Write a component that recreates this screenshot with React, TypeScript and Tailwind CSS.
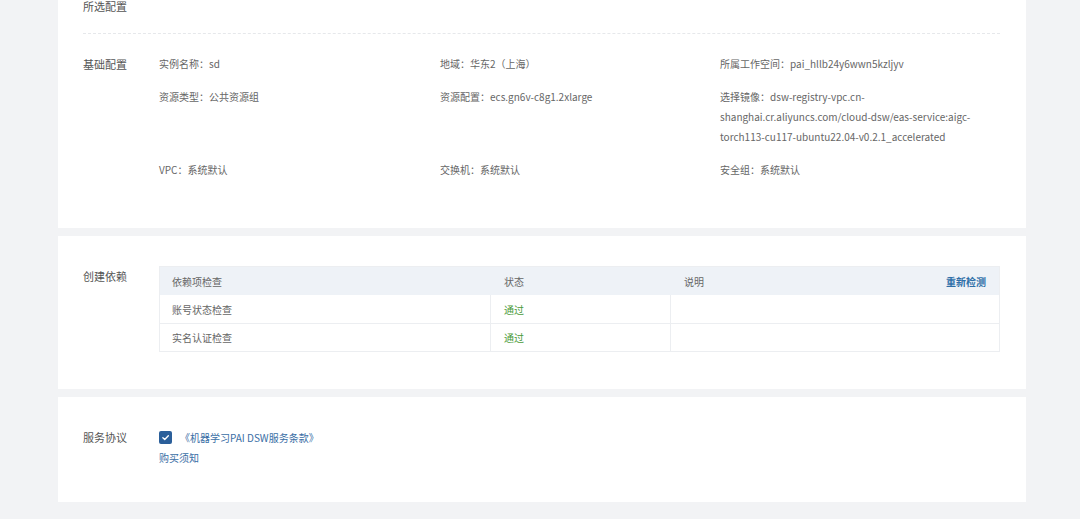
import React from 'react';

const font = { fontFamily: '"Noto Sans CJK SC", "Noto Sans", sans-serif' };

// Basic config items, laid out in a 3-column grid
const basicItems: { label: string; value: React.ReactNode }[] = [
  { label: '实例名称', value: 'sd' },
  { label: '地域', value: '华东2（上海）' },
  { label: '所属工作空间', value: 'pai_hllb24y6wwn5kzljyv' },
  { label: '资源类型', value: '公共资源组' },
  { label: '资源配置', value: 'ecs.gn6v-c8g1.2xlarge' },
  {
    label: '选择镜像',
    value: 'dsw-registry-vpc.cn-shanghai.cr.aliyuncs.com/cloud-dsw/eas-service:aigc-torch113-cu117-ubuntu22.04-v0.2.1_accelerated',
  },
  { label: 'VPC', value: '系统默认' },
  { label: '交换机', value: '系统默认' },
  { label: '安全组', value: '系统默认' },
];

const checks = [
  { name: '账号状态检查', status: '通过' },
  { name: '实名认证检查', status: '通过' },
];

const Card: React.FC<{ className?: string; children: React.ReactNode }> = ({ className = '', children }) => (
  <div className={`bg-white mx-[58px] w-[968px] px-[25px] ${className}`}>{children}</div>
);

const App: React.FC = () => {
  return (
    <div className="w-[1080px] h-[519px] overflow-hidden bg-[#f2f3f5]" style={font}>
      <div className="flex flex-col gap-2 -mt-[4px]">
        {/* Selected configuration */}
        <Card className="pb-[48px]">
          <div className="text-[11px] leading-[20px] text-[#555]">所选配置</div>
          <div className="mt-[17px] border-t border-dashed border-[#e6e8eb] w-[917px]" />
          <div className="flex mt-[20px]">
            <div className="w-[76px] shrink-0 text-[11px] leading-[20px] text-[#555]">基础配置</div>
            <div className="grid grid-cols-[281px_280px_258px] gap-y-[13px] text-[10px] leading-[20px] text-[#666]">
              {basicItems.map(item => (
                <div key={item.label}>
                  {item.label}：{item.value}
                </div>
              ))}
            </div>
          </div>
        </Card>

        {/* Dependency checks */}
        <Card className="pt-[30px] pb-[37px]">
          <div className="flex">
            <div className="w-[76px] shrink-0 text-[11px] leading-[20px] text-[#555]">创建依赖</div>
            <div className="w-[841px] border border-[#eceef1] text-[10px] text-[#666]">
              <div className="flex h-[28px] items-center bg-[#eef2f7]">
                <div className="w-[331px] pl-[12px]">依赖项检查</div>
                <div className="w-[180px] pl-[13px]">状态</div>
                <div className="flex-1 pl-[13px] flex justify-between pr-[13px]">
                  <span>说明</span>
                  <span className="font-bold text-[#2f6fa8]">重新检测</span>
                </div>
              </div>
              {checks.map((c, i) => (
                <div key={c.name} className={`flex h-[28px] ${i > 0 ? 'border-t border-[#eceef1]' : ''}`}>
                  <div className="w-[331px] pl-[12px] flex items-center border-r border-[#eceef1]">{c.name}</div>
                  <div className="w-[180px] pl-[13px] flex items-center border-r border-[#eceef1] text-[#4a9a3a]">
                    {c.status}
                  </div>
                  <div className="flex-1" />
                </div>
              ))}
            </div>
          </div>
        </Card>

        {/* Service agreement */}
        <Card className="pt-[30px] pb-[33px]">
          <div className="flex">
            <div className="w-[76px] shrink-0 text-[11px] leading-[20px] text-[#555]">服务协议</div>
            <div className="flex flex-col text-[10px]">
              <div className="flex items-center h-[20px] gap-[8px]">
                <span className="w-[13px] h-[13px] rounded-[2px] bg-[#2b5f9a] flex items-center justify-center">
                  <svg width="9" height="9" viewBox="0 0 12 12" fill="none">
                    <path d="M2.5 6.2 5 8.6 9.8 3.6" stroke="white" strokeWidth="1.8" strokeLinecap="round" strokeLinejoin="round" />
                  </svg>
                </span>
                <span className="text-[#3a6ea5]">《机器学习PAI DSW服务条款》</span>
              </div>
              <div className="leading-[22px] text-[#3a6ea5]">购买须知</div>
            </div>
          </div>
        </Card>
      </div>
    </div>
  );
};

export default App;
